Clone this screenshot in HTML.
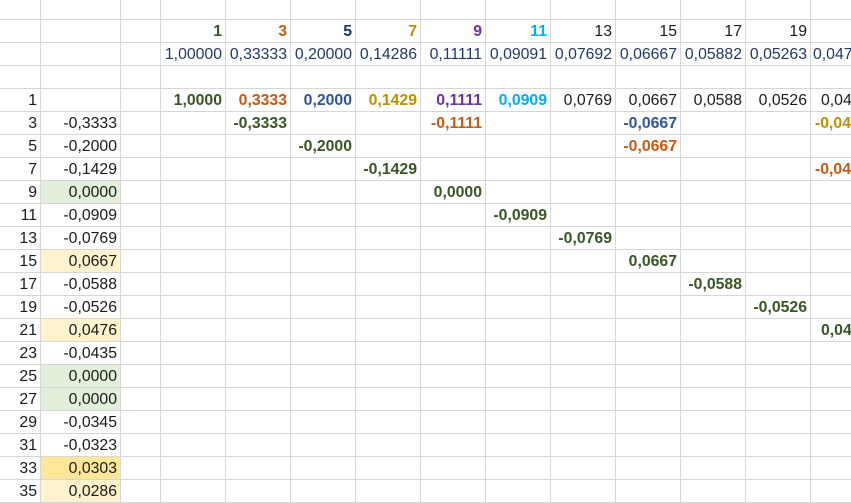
<!DOCTYPE html>
<html><head><meta charset="utf-8"><style>
html,body{margin:0;padding:0;background:#fff;width:851px;height:490px;overflow:hidden}
table{border-collapse:collapse;table-layout:fixed;width:875px;font-family:"Liberation Sans",sans-serif;font-size:15.8px;color:#1a1a1a;position:absolute;left:-1px;top:-1px}
td{border:1px solid #d6d6d6;height:22px;padding:0 3px 0 0;text-align:right;vertical-align:bottom;white-space:nowrap;overflow:hidden;line-height:20px}
tr.t td{height:19px}
.g{color:#375623;font-weight:bold}.o{color:#c55a11;font-weight:bold}.bl{color:#2f5597;font-weight:bold}.nv{color:#203864;font-weight:bold}
.y{color:#bf8f00;font-weight:bold}.p{color:#7030a0;font-weight:bold}.c{color:#00b0f0;font-weight:bold}
.fg{background:#e2efda}.fy{background:#fff2cc}.fd{background:#ffe699}
</style></head><body>
<table>
<colgroup><col style="width:41px"><col style="width:80px"><col style="width:40px"><col style="width:65px"><col style="width:65px"><col style="width:65px"><col style="width:65px"><col style="width:65px"><col style="width:65px"><col style="width:65px"><col style="width:65px"><col style="width:65px"><col style="width:65px"><col style="width:65px"></colgroup>
<tr class="t"><td></td><td></td><td></td><td></td><td></td><td></td><td></td><td></td><td></td><td></td><td></td><td></td><td></td><td></td></tr>
<tr><td></td><td></td><td></td><td class="g">1</td><td class="o">3</td><td class="nv">5</td><td class="y">7</td><td class="p">9</td><td class="c">11</td><td>13</td><td>15</td><td>17</td><td>19</td><td></td></tr>
<tr style="color:#203864"><td></td><td></td><td></td><td>1,00000</td><td>0,33333</td><td>0,20000</td><td>0,14286</td><td>0,11111</td><td>0,09091</td><td>0,07692</td><td>0,06667</td><td>0,05882</td><td>0,05263</td><td style="text-align:left;padding-left:2px">0,04762</td></tr>
<tr><td></td><td></td><td></td><td></td><td></td><td></td><td></td><td></td><td></td><td></td><td></td><td></td><td></td><td></td></tr>
<tr><td>1</td><td></td><td></td><td class="g">1,0000</td><td class="o">0,3333</td><td class="bl">0,2000</td><td class="y">0,1429</td><td class="p">0,1111</td><td class="c">0,0909</td><td>0,0769</td><td>0,0667</td><td>0,0588</td><td>0,0526</td><td style="text-align:left;padding-left:10px">0,0476</td></tr>
<tr><td>3</td><td>-0,3333</td><td></td><td></td><td class="g">-0,3333</td><td></td><td></td><td class="o">-0,1111</td><td></td><td></td><td class="bl">-0,0667</td><td></td><td></td><td class="y" style="text-align:left;padding-left:4px">-0,0476</td></tr>
<tr><td>5</td><td>-0,2000</td><td></td><td></td><td></td><td class="g">-0,2000</td><td></td><td></td><td></td><td></td><td class="o">-0,0667</td><td></td><td></td><td></td></tr>
<tr><td>7</td><td>-0,1429</td><td></td><td></td><td></td><td></td><td class="g">-0,1429</td><td></td><td></td><td></td><td></td><td></td><td></td><td class="o" style="text-align:left;padding-left:4px">-0,0476</td></tr>
<tr><td>9</td><td class="fg">0,0000</td><td></td><td></td><td></td><td></td><td></td><td class="g">0,0000</td><td></td><td></td><td></td><td></td><td></td><td></td></tr>
<tr><td>11</td><td>-0,0909</td><td></td><td></td><td></td><td></td><td></td><td></td><td class="g">-0,0909</td><td></td><td></td><td></td><td></td><td></td></tr>
<tr><td>13</td><td>-0,0769</td><td></td><td></td><td></td><td></td><td></td><td></td><td></td><td class="g">-0,0769</td><td></td><td></td><td></td><td></td></tr>
<tr><td>15</td><td class="fy">0,0667</td><td></td><td></td><td></td><td></td><td></td><td></td><td></td><td></td><td class="g">0,0667</td><td></td><td></td><td></td></tr>
<tr><td>17</td><td>-0,0588</td><td></td><td></td><td></td><td></td><td></td><td></td><td></td><td></td><td></td><td class="g">-0,0588</td><td></td><td></td></tr>
<tr><td>19</td><td>-0,0526</td><td></td><td></td><td></td><td></td><td></td><td></td><td></td><td></td><td></td><td></td><td class="g">-0,0526</td><td></td></tr>
<tr><td>21</td><td class="fy">0,0476</td><td></td><td></td><td></td><td></td><td></td><td></td><td></td><td></td><td></td><td></td><td></td><td class="g" style="text-align:left;padding-left:10px">0,0476</td></tr>
<tr><td>23</td><td>-0,0435</td><td></td><td></td><td></td><td></td><td></td><td></td><td></td><td></td><td></td><td></td><td></td><td></td></tr>
<tr><td>25</td><td class="fg">0,0000</td><td></td><td></td><td></td><td></td><td></td><td></td><td></td><td></td><td></td><td></td><td></td><td></td></tr>
<tr><td>27</td><td class="fg">0,0000</td><td></td><td></td><td></td><td></td><td></td><td></td><td></td><td></td><td></td><td></td><td></td><td></td></tr>
<tr><td>29</td><td>-0,0345</td><td></td><td></td><td></td><td></td><td></td><td></td><td></td><td></td><td></td><td></td><td></td><td></td></tr>
<tr><td>31</td><td>-0,0323</td><td></td><td></td><td></td><td></td><td></td><td></td><td></td><td></td><td></td><td></td><td></td><td></td></tr>
<tr><td>33</td><td class="fd">0,0303</td><td></td><td></td><td></td><td></td><td></td><td></td><td></td><td></td><td></td><td></td><td></td><td></td></tr>
<tr><td>35</td><td class="fy">0,0286</td><td></td><td></td><td></td><td></td><td></td><td></td><td></td><td></td><td></td><td></td><td></td><td></td></tr>
</table>
</body></html>
